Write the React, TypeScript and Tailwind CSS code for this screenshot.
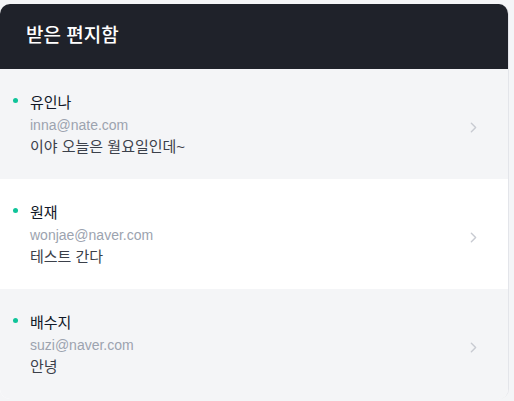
import { ChevronRight } from "lucide-react";

interface Mail {
    name: string;
    email: string;
    message: string;
}

const mails: Mail[] = [
    { name: "유인나", email: "inna@nate.com", message: "이야 오늘은 월요일인데~" },
    { name: "원재", email: "wonjae@naver.com", message: "테스트 간다" },
    { name: "배수지", email: "suzi@naver.com", message: "안녕" },
];

function MailRow({ mail, index }: { mail: Mail; index: number }) {
    return (
        <div
            className={`flex items-center pt-[23px] pb-[21px] pl-[13px] pr-[26px] ${
                index % 2 === 0 ? "bg-[#f4f5f7]" : "bg-white"
            }`}
        >
            <div className="flex flex-1 items-start gap-[12px]">
                <span className="mt-[6px] h-[5px] w-[5px] rounded-full bg-[#10c49a]" />
                <div className="flex flex-col leading-[22px]">
                    <span className="text-[15px] text-[#111827]">{mail.name}</span>
                    <span className="text-[14px] text-[#9ca3af]">{mail.email}</span>
                    <span className="text-[15px] text-[#3b404a]">{mail.message}</span>
                </div>
            </div>
            <ChevronRight className="mt-[4px] h-[17px] w-[17px] text-[#c8cbd2]" strokeWidth={2} />
        </div>
    );
}

export default function App() {
    return (
        <div
            className="min-h-screen bg-[#f4f5f7] pt-[4px] pr-[5px]"
            style={{ fontFamily: '"Liberation Sans", "Noto Sans CJK KR", sans-serif' }}
        >
            <div className="overflow-hidden rounded-[10px] border-r border-[#e3e5ea] bg-white">
                {/* Header */}
                <div className="flex h-[65px] items-center bg-[#1f222a] px-[26px]">
                    <h1 className="text-[19px] font-medium text-white">받은 편지함</h1>
                </div>

                {/* List */}
                <div>
                    {mails.map((mail, i) => (
                        <MailRow key={mail.email} mail={mail} index={i} />
                    ))}
                </div>
            </div>
        </div>
    );
}
